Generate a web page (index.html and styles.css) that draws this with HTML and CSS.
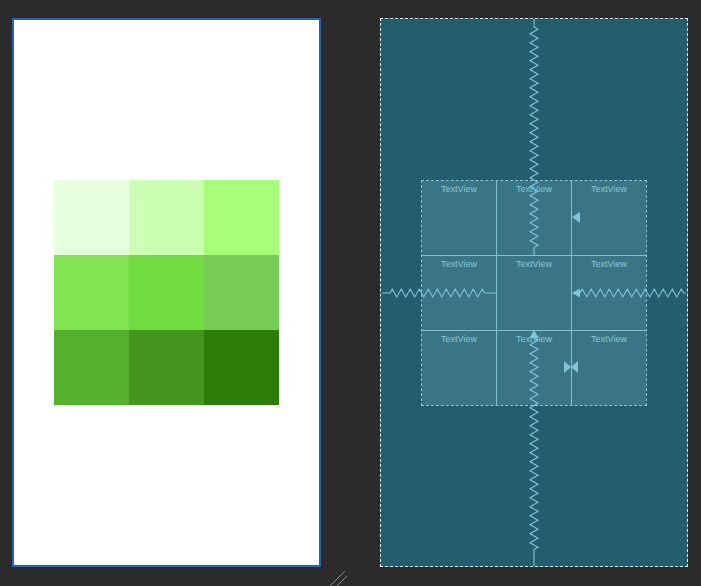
FILE: index.html
```html
<!DOCTYPE html>
<html>
<head>
<meta charset="utf-8">
<link rel="stylesheet" href="styles.css">
</head>
<body>
<div class="stage">
  <div class="design">
    <div class="swatches">
      <div class="sw c11"></div><div class="sw c12"></div><div class="sw c13"></div>
      <div class="sw c21"></div><div class="sw c22"></div><div class="sw c23"></div>
      <div class="sw c31"></div><div class="sw c32"></div><div class="sw c33"></div>
    </div>
  </div>
  <div class="blueprint">
    <div class="bgrid">
      <div class="bcell">TextView</div><div class="bcell">TextView</div><div class="bcell">TextView</div>
      <div class="bcell">TextView</div><div class="bcell">TextView</div><div class="bcell">TextView</div>
      <div class="bcell">TextView</div><div class="bcell">TextView</div><div class="bcell">TextView</div>
    </div>
    <svg class="constraints" width="308" height="549" viewBox="0 0 308 549">
      <g fill="none" stroke="#7fc6d8" stroke-width="1.1">
        <path d="M154 1 V9 l4 2.25 l-8 4.5 l8 4.5 l-8 4.5 l8 4.5 l-8 4.5 l8 4.5 l-8 4.5 l8 4.5 l-8 4.5 l8 4.5 l-8 4.5 l8 4.5 l-8 4.5 l8 4.5 l-8 4.5 l8 4.5 l-8 4.5 l8 4.5 l-8 4.5 l8 4.5 l-8 4.5 l8 4.5 l-8 4.5 l8 4.5 l-8 4.5 l8 4.5 l-8 4.5 l8 4.5 l-8 4.5 l8 4.5 l-8 4.5 l8 4.5 l-8 4.5 l8 4.5 l-8 4.5 l8 4.5 l-8 4.5 l8 4.5 l-8 4.5 l8 4.5 l-8 4.5 l8 4.5 l-8 4.5 l8 4.5 l-8 4.5 l8 4.5 l-8 4.5 l8 4.5 l-4 2.25 V237"/>
        <path d="M154 320 l4 2.25 l-8 4.5 l8 4.5 l-8 4.5 l8 4.5 l-8 4.5 l8 4.5 l-8 4.5 l8 4.5 l-8 4.5 l8 4.5 l-8 4.5 l8 4.5 l-8 4.5 l8 4.5 l-8 4.5 l8 4.5 l-8 4.5 l8 4.5 l-8 4.5 l8 4.5 l-8 4.5 l8 4.5 l-8 4.5 l8 4.5 l-8 4.5 l8 4.5 l-8 4.5 l8 4.5 l-8 4.5 l8 4.5 l-8 4.5 l8 4.5 l-8 4.5 l8 4.5 l-8 4.5 l8 4.5 l-8 4.5 l8 4.5 l-8 4.5 l8 4.5 l-8 4.5 l8 4.5 l-8 4.5 l8 4.5 l-8 4.5 l8 4.5 l-4 2.25 V548"/>
        <path d="M2 275 H10 l2.25 -4 l4.5 8 l4.5 -8 l4.5 8 l4.5 -8 l4.5 8 l4.5 -8 l4.5 8 l4.5 -8 l4.5 8 l4.5 -8 l4.5 8 l4.5 -8 l4.5 8 l4.5 -8 l4.5 8 l4.5 -8 l4.5 8 l4.5 -8 l4.5 8 l4.5 -8 l2.25 4 H116"/>
        <path d="M200 275 l2.25 -4 l4.5 8 l4.5 -8 l4.5 8 l4.5 -8 l4.5 8 l4.5 -8 l4.5 8 l4.5 -8 l4.5 8 l4.5 -8 l4.5 8 l4.5 -8 l4.5 8 l4.5 -8 l4.5 8 l4.5 -8 l4.5 8 l4.5 -8 l4.5 8 l4.5 -8 l4.5 8 l4.5 -8 l2.25 4 H306"/>
      </g>
      <g fill="#7fc6d8">
        <polygon points="192,275 200,270.5 200,279.5"/>
        <polygon points="154,312 149.5,320 158.5,320"/>
        <polygon points="192,199 200,194 200,205"/>
        <polygon points="191,349 184,343 184,355"/>
        <polygon points="191,349 198,343 198,355"/>
      </g>
    </svg>
  </div>
</div>
<svg class="grip" width="20" height="18" viewBox="0 0 20 18">
  <g stroke="#8a8a8a" stroke-width="1" fill="none">
    <path d="M1 17 L16 2"/>
    <path d="M8 17 L18 7"/>
  </g>
</svg>
</body>
</html>
```
FILE: styles.css
```css
html, body {
  margin: 0;
  padding: 0;
  background: #2b2b2c;
  width: 701px;
  height: 586px;
  overflow: hidden;
  font-family: "Liberation Sans", "DejaVu Sans", sans-serif;
}

.stage {
  display: flex;
  gap: 59px;
  padding: 18px 0 0 12px;
}

.design {
  box-sizing: border-box;
  width: 309px;
  height: 549px;
  background: #ffffff;
  border: 2px solid #2463b0;
  display: flex;
  align-items: center;
  justify-content: center;
}

.swatches {
  display: grid;
  grid-template-columns: repeat(3, 75px);
  grid-template-rows: repeat(3, 75px);
}

.c11 { background: #e6ffdc; }
.c12 { background: #ccffb4; }
.c13 { background: #a6ff77; }
.c21 { background: #80e551; }
.c22 { background: #70dc40; }
.c23 { background: #77cc55; }
.c31 { background: #55b02e; }
.c32 { background: #44961f; }
.c33 { background: #2e7d0b; }

.blueprint {
  position: relative;
  box-sizing: border-box;
  width: 308px;
  height: 549px;
  background: #245d6d;
  border: 1px dashed #e6eef0;
  display: flex;
  align-items: center;
  justify-content: center;
}

.bgrid {
  display: grid;
  grid-template-columns: repeat(3, 74px);
  grid-template-rows: repeat(3, 74px);
  gap: 1px;
  margin-top: 1px;
  background: #80c2d2;
  background-clip: padding-box;
  border: 1px dashed #86c9da;
}

.bcell {
  background: #3a7585;
  color: #88c8d8;
  font-size: 9px;
  line-height: 11px;
  text-align: center;
  padding-top: 3px;
}

.constraints {
  position: absolute;
  left: -1px;
  top: -1px;
}

.grip {
  position: absolute;
  left: 329px;
  top: 569px;
}
```
